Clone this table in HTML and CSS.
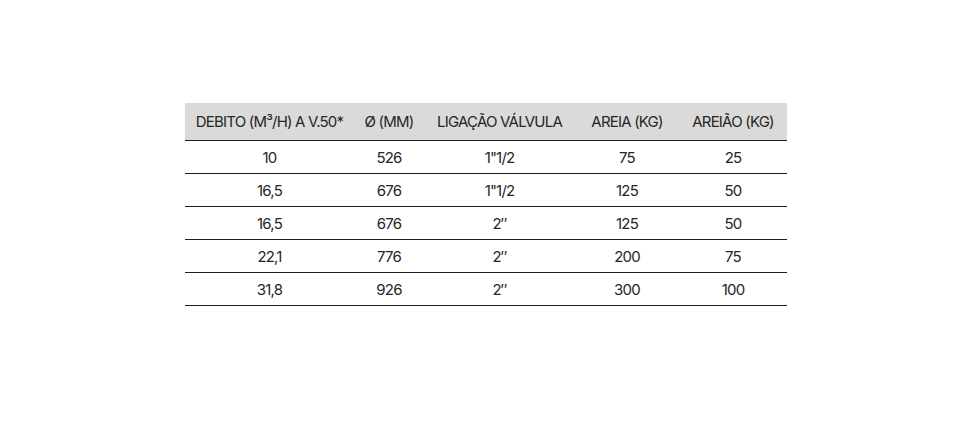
FILE: index.html
```html
<!DOCTYPE html>
<html lang="pt">
<head>
<meta charset="utf-8">
<link rel="stylesheet" href="styles.css">
</head>
<body>
<div class="page">
  <table class="spec">
    <colgroup>
      <col class="c1"><col class="c2"><col class="c3"><col class="c4"><col class="c5">
    </colgroup>
    <thead>
      <tr>
        <th>DEBITO (M³/H) A V.50*</th>
        <th>Ø (MM)</th>
        <th>LIGAÇÃO VÁLVULA</th>
        <th>AREIA (KG)</th>
        <th>AREIÃO (KG)</th>
      </tr>
    </thead>
    <tbody>
      <tr><td>10</td><td>526</td><td>1"1/2</td><td>75</td><td>25</td></tr>
      <tr><td>16,5</td><td>676</td><td>1"1/2</td><td>125</td><td>50</td></tr>
      <tr><td>16,5</td><td>676</td><td>2″</td><td>125</td><td>50</td></tr>
      <tr><td>22,1</td><td>776</td><td>2″</td><td>200</td><td>75</td></tr>
      <tr><td>31,8</td><td>926</td><td>2″</td><td>300</td><td>100</td></tr>
    </tbody>
  </table>
</div>
</body>
</html>
```
FILE: styles.css
```css
html, body {
  margin: 0;
  padding: 0;
  background: #ffffff;
}
.page {
  width: 971px;
  height: 431px;
  display: flex;
  justify-content: center;
  align-items: flex-start;
  padding-top: 103px;
  box-sizing: border-box;
}
.spec {
  width: 602px;
  margin-left: 1px;
  table-layout: fixed;
  border-collapse: collapse;
  font-family: Inter, "Noto Sans", sans-serif;
  font-size: 15px;
  letter-spacing: -0.8px;
  color: #262626;
}
.c1 { width: 169px; }
.c2 { width: 70px; }
.c3 { width: 151px; }
.c4 { width: 104px; }
.c5 { width: 108px; }
.spec th {
  background: #dadada;
  font-weight: 400;
  height: 37px;
  padding: 0;
  text-align: center;
  white-space: nowrap;
  border-bottom: 1.5px solid #1e1e1e;
}
.spec td {
  height: 32px;
  padding: 0;
  text-align: center;
  border-bottom: 1.5px solid #1e1e1e;
}
```
